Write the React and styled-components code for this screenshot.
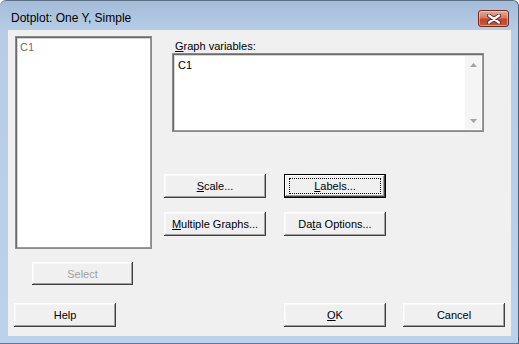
import React from 'react';
import styled, { createGlobalStyle, css } from 'styled-components';

const GlobalStyle = createGlobalStyle`
  html, body {
    margin: 0;
    padding: 0;
    background: #ffffff;
  }
  body {
    font-family: "Liberation Sans", Arial, sans-serif;
    font-size: 11px;
  }
`;

const CloseIcon = () => (
  <svg width="14" height="10" viewBox="0 0 14 10">
    <path d="M2 1.5 L12 8.5 M12 1.5 L2 8.5" stroke="#5a2a22" strokeWidth="4" strokeLinecap="round" />
    <path d="M2 1.5 L12 8.5 M12 1.5 L2 8.5" stroke="#ffffff" strokeWidth="2.2" strokeLinecap="round" />
  </svg>
);

const Arrow = ({ up }) => (
  <svg width="7" height="4" viewBox="0 0 7 4">
    <path d={up ? 'M0 4 L3.5 0 L7 4 Z' : 'M0 0 L3.5 4 L7 0 Z'} fill="#a3a3a3" />
  </svg>
);

const Mn = ({ children }) => <u>{children}</u>;

const App = () => {
  return (
    <>
      <GlobalStyle />
      <Window>
        <TitleBar>
          <Title>Dotplot: One Y, Simple</Title>
          <CloseButton>
            <CloseIcon />
          </CloseButton>
        </TitleBar>
        <Content>
          <TopSection>
            <LeftCol>
              <ListBox>
                <ListItem>C1</ListItem>
              </ListBox>
              <SelectButton disabled>Select</SelectButton>
            </LeftCol>
            <RightCol>
              <FieldLabel>
                <Mn>G</Mn>raph variables:
              </FieldLabel>
              <TextBox>
                <TextValue>C1</TextValue>
                <ScrollBar>
                  <Arrow up />
                  <Arrow />
                </ScrollBar>
              </TextBox>
              <ButtonGrid>
                <Button>
                  <Mn>S</Mn>cale...
                </Button>
                <Button $default>
                  <FocusText>
                    <Mn>L</Mn>abels...
                  </FocusText>
                </Button>
                <Button>
                  <Mn>M</Mn>ultiple Graphs...
                </Button>
                <Button>
                  Da<Mn>t</Mn>a Options...
                </Button>
              </ButtonGrid>
            </RightCol>
          </TopSection>
          <BottomRow>
            <Button>Help</Button>
            <Spacer />
            <Button>
              <Mn>O</Mn>K
            </Button>
            <Button>Cancel</Button>
          </BottomRow>
        </Content>
      </Window>
    </>
  );
};

const Window = styled.div`
  width: 519px;
  height: 344px;
  box-sizing: border-box;
  border-top: 1px solid #5a6f86;
  border-right: 1px solid #4b6178;
  border-bottom: 1px solid #3d8aa8;
  border-radius: 6px 6px 0 0;
  background: linear-gradient(to bottom, #a4bcd9 0px, #b7cde7 30px, #bad2ec 100%);
  display: flex;
  flex-direction: column;
  overflow: hidden;
`;

const TitleBar = styled.div`
  height: 29px;
  box-sizing: border-box;
  padding: 9px 9px 0 11px;
  display: flex;
  align-items: flex-start;
  justify-content: space-between;
`;

const Title = styled.div`
  font-family: "Liberation Sans", Arial, sans-serif;
  font-size: 12px;
  line-height: 16px;
  color: #000000;
`;

const CloseButton = styled.div`
  width: 31px;
  height: 17px;
  box-sizing: border-box;
  border: 1px solid #6b2c22;
  border-radius: 3px;
  background: linear-gradient(to bottom, #e7a99b 0%, #d9775f 45%, #c1452c 55%, #c8573a 100%);
  box-shadow: inset 0 0 0 1px rgba(255, 220, 210, 0.5);
  display: flex;
  align-items: center;
  justify-content: center;
`;

const Content = styled.div`
  flex: 1;
  margin: 0 7px 7px 8px;
  background: #f0f0f0;
  padding: 6px 0 0 6px;
  display: flex;
  flex-direction: column;
`;

const TopSection = styled.div`
  display: flex;
  align-items: flex-start;
`;

const LeftCol = styled.div`
  display: flex;
  flex-direction: column;
  align-items: flex-start;
  padding-left: 1px;
`;

const ListBox = styled.div`
  width: 137px;
  height: 213px;
  box-sizing: border-box;
  background: #ffffff;
  border: 1px solid #8a8a8a;
  box-shadow: inset 1px 1px 0 #6a6a6a, inset -1px -1px 0 #9a9a9a, inset 2px 2px 0 #d6d6d6;
  padding: 4px 4px;
`;

const ListItem = styled.div`
  color: #707070;
  line-height: 13px;
`;

const buttonFace = css`
  width: 102px;
  height: 24px;
  box-sizing: border-box;
  padding: 0;
  margin: 0;
  font-family: "Liberation Sans", Arial, sans-serif;
  font-size: 11px;
  color: #000000;
  background: #f0f0f0;
  border: none;
  border-radius: 0;
  box-shadow: inset -1px -1px 0 #404040, inset 1px 1px 0 #ffffff, inset -2px -2px 0 #a0a0a0, inset 2px 2px 0 #f8f8f8;
  display: flex;
  align-items: center;
  justify-content: center;
  cursor: default;
`;

const Button = styled.button`
  ${buttonFace}
  ${(p) =>
    p.$default &&
    css`
      border: 1px solid #000000;
      box-shadow: inset -1px -1px 0 #404040, inset 1px 1px 0 #ffffff, inset -2px -2px 0 #a0a0a0;
    `}
`;

const FocusText = styled.span`
  display: flex;
  align-items: center;
  justify-content: center;
  width: 90px;
  height: 14px;
  outline: 1px dotted #000000;
`;

const SelectButton = styled.button`
  ${buttonFace}
  width: 101px;
  height: 23px;
  margin: 13px 0 0 17px;
  color: #a0a0a0;
`;

const RightCol = styled.div`
  display: flex;
  flex-direction: column;
  align-items: flex-start;
  margin-left: 12px;
`;

const FieldLabel = styled.div`
  margin: 4px 0 0 11px;
  line-height: 13px;
  color: #000000;
`;

const TextBox = styled.div`
  width: 312px;
  height: 79px;
  margin-left: 8px;
  box-sizing: border-box;
  background: #ffffff;
  border: 1px solid #8a8a8a;
  box-shadow: inset 1px 1px 0 #6a6a6a, inset -1px -1px 0 #9a9a9a, inset 2px 2px 0 #d6d6d6;
  padding: 2px 2px 2px 3px;
  display: flex;
  justify-content: space-between;
`;

const TextValue = styled.div`
  padding: 3px 0 0 2px;
  line-height: 13px;
  color: #000000;
`;

const ScrollBar = styled.div`
  width: 16px;
  background: #f5f5f5;
  display: flex;
  flex-direction: column;
  align-items: center;
  justify-content: space-between;
  padding: 7px 0 6px;
  box-sizing: border-box;
`;

const ButtonGrid = styled.div`
  display: grid;
  grid-template-columns: 102px 102px;
  column-gap: 18px;
  row-gap: 14px;
  margin-top: 42px;
`;

const BottomRow = styled.div`
  display: flex;
  margin-top: 18px;
  gap: 17px;
`;

const Spacer = styled.div`
  width: 134px;
`;

export default App;
